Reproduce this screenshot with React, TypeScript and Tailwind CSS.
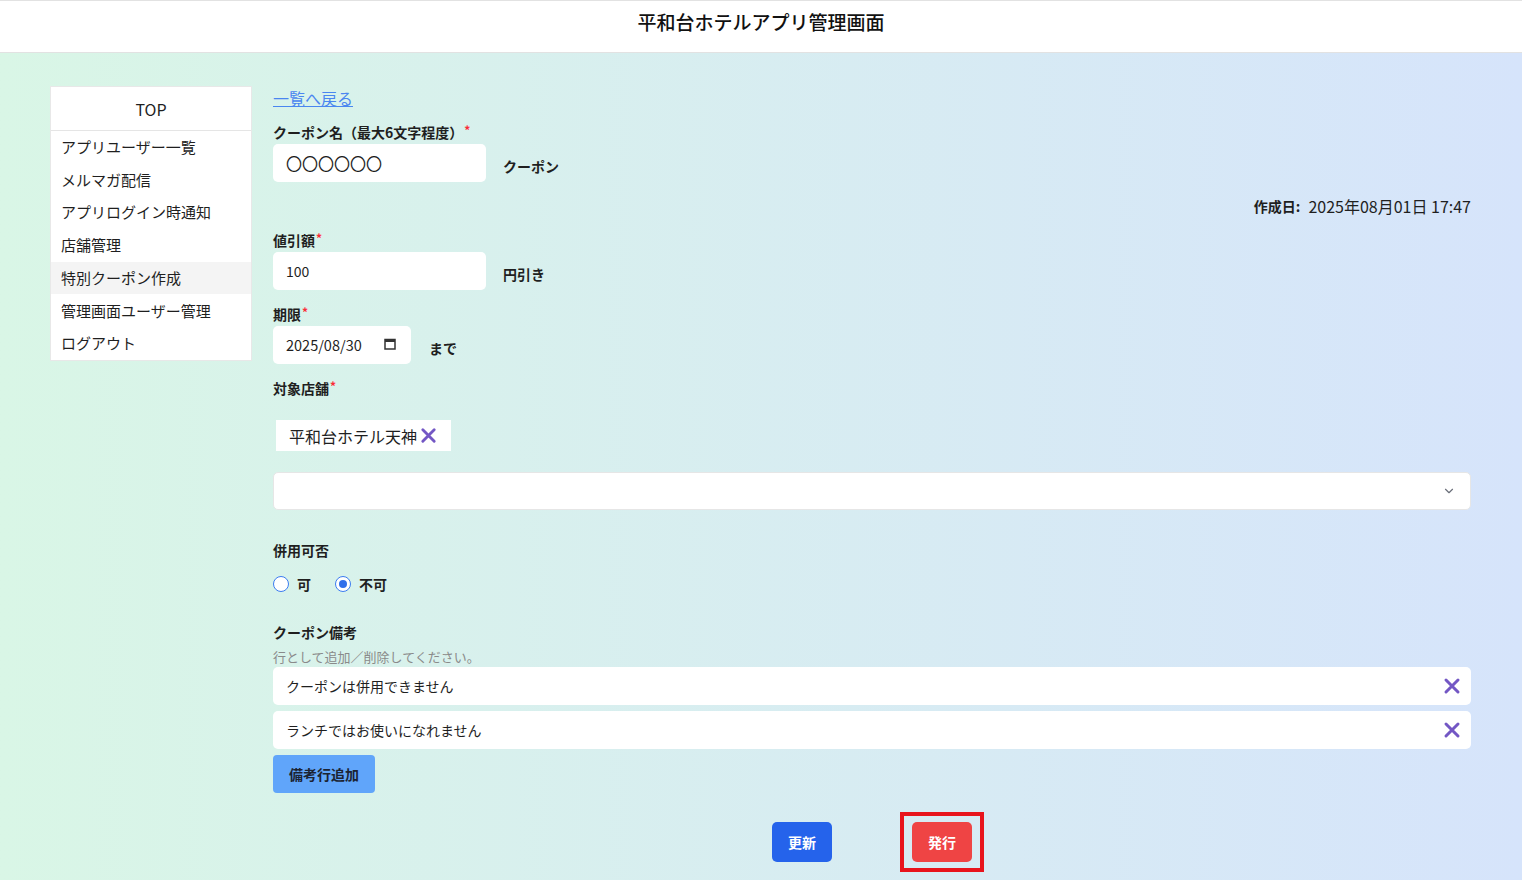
import { ChevronDown } from "lucide-react";

const menu = [
  "アプリユーザー一覧",
  "メルマガ配信",
  "アプリログイン時通知",
  "店舗管理",
  "特別クーポン作成",
  "管理画面ユーザー管理",
  "ログアウト",
];

const notes = ["クーポンは併用できません", "ランチではお使いになれません"];

function Cross({ className }: { className?: string }) {
  return (
    <svg viewBox="0 0 20 20" className={className} aria-hidden="true">
      <path d="M4 4 L16 16 M16 4 L4 16" stroke="#7357c4" strokeWidth="3" strokeLinecap="round" />
    </svg>
  );
}

function Req() {
  return <span className="relative -top-[3px] ml-[1px] text-[12px] leading-none text-red-500">*</span>;
}

function Label({ children }: { children: React.ReactNode }) {
  return <div className="h-[20px] text-[14px] font-semibold leading-[20px] text-[#1f1f1f]">{children}</div>;
}

function Radio({ checked, label }: { checked?: boolean; label: string }) {
  return (
    <label className="flex items-center gap-[8px]">
      <span className="grid h-[16px] w-[16px] place-items-center rounded-full border border-[#3b7cf0] bg-white">
        {checked && <span className="h-[8px] w-[8px] rounded-full bg-[#2f6fea]" />}
      </span>
      <span className="text-[14px] font-semibold">{label}</span>
    </label>
  );
}

export default function App() {
  return (
    <div className="min-h-screen font-['Noto_Sans_CJK_JP','Noto_Sans',sans-serif] text-[#1f1f1f]">
      <header className="flex h-[53px] items-center justify-center border-t border-b border-[#e2e2e2] bg-white">
        <h1 className="-mt-[8px] text-[19px] font-medium text-[#111]">平和台ホテルアプリ管理画面</h1>
      </header>

      <div className="flex items-start gap-[21px] bg-linear-to-r from-[#d9f6e6] to-[#d6e4fb] pt-[33px] pr-[51px] pb-[40px] pl-[50px]">
        <aside className="w-[202px] shrink-0 border border-[#e8e8e8] bg-white">
          <div className="flex h-[44px] items-center justify-center border-b border-[#e5e5e5] text-[16px]">TOP</div>
          <ul>
            {menu.map((m) => (
              <li
                key={m}
                className={`flex h-[32.7px] items-center px-[10px] text-[15px] ${m === "特別クーポン作成" ? "bg-[#f4f4f4]" : ""}`}
              >
                {m}
              </li>
            ))}
          </ul>
        </aside>

        <main className="min-w-0 flex-1">
          <a href="#" className="block h-[24px] text-[16px] leading-[24px] text-[#4a86f0] underline">
            一覧へ戻る
          </a>

          <div className="mt-[12px]">
            <Label>
              クーポン名（最大6文字程度）
              <Req />
            </Label>
          </div>
          <div className="mt-[2px] flex items-end gap-[17px]">
            <div className="flex h-[38px] w-[213px] items-center rounded-[5px] bg-white px-[13px] text-[16px]">〇〇〇〇〇〇</div>
            <span className="pb-[6px] text-[14px] font-semibold leading-[20px]">クーポン</span>
          </div>

          <div className="mt-[13px] flex h-[22px] items-center justify-end gap-[8px]">
            <span className="text-[14px] font-semibold">作成日:</span>
            <span className="text-[16px]">2025年08月01日 17:47</span>
          </div>

          <div className="mt-[13px]">
            <Label>
              値引額<Req />
            </Label>
          </div>
          <div className="mt-[2px] flex items-end gap-[17px]">
            <div className="flex h-[38px] w-[213px] items-center rounded-[5px] bg-white px-[13px] text-[14px]">100</div>
            <span className="pb-[6px] text-[14px] font-semibold leading-[20px]">円引き</span>
          </div>

          <div className="mt-[14px]">
            <Label>
              期限<Req />
            </Label>
          </div>
          <div className="mt-[2px] flex items-end gap-[18px]">
            <div className="flex h-[38px] w-[138px] items-center justify-between rounded-[5px] bg-white pr-[15px] pl-[13px] text-[14.5px]">
              <span>2025/08/30</span>
              <svg viewBox="0 0 12 12" className="mt-[-2px] h-[12px] w-[12px]" aria-hidden="true">
                <path d="M1 1.5 H11 V11 H1 Z" fill="none" stroke="#333" strokeWidth="1.5" />
                <rect x="1" y="1.5" width="10" height="2.5" fill="#333" />
              </svg>
            </div>
            <span className="pb-[6px] text-[14px] font-semibold leading-[20px]">まで</span>
          </div>

          <div className="mt-[14px]">
            <Label>
              対象店舗<Req />
            </Label>
          </div>
          <div className="mt-[22px] ml-[3px] inline-flex h-[31px] items-center gap-[2px] bg-white pr-[13px] pl-[13px] text-[16px]">
            平和台ホテル天神
            <Cross className="h-[19px] w-[19px]" />
          </div>
          <div className="mt-[21px] flex h-[38px] items-center justify-end rounded-[5px] border border-[#e6e6e6] bg-white pr-[14px]">
            <ChevronDown className="h-[14px] w-[14px] text-[#6b6f7a]" strokeWidth={2} />
          </div>

          <div className="mt-[30px]">
            <Label>併用可否</Label>
          </div>
          <div className="mt-[14px] flex h-[20px] items-center gap-[24px]">
            <Radio label="可" />
            <Radio checked label="不可" />
          </div>

          <div className="mt-[28px]">
            <Label>クーポン備考</Label>
          </div>
          <div className="mt-[6px] text-[13px] leading-[18px] text-[#8a8a8a]">行として追加／削除してください。</div>
          <div className="mt-[1px] flex flex-col gap-[6px]">
            {notes.map((n) => (
              <div key={n} className="flex h-[38px] items-center justify-between rounded-[5px] bg-white pr-[9px] pl-[13px] text-[14px]">
                <span>{n}</span>
                <Cross className="h-[20px] w-[20px]" />
              </div>
            ))}
          </div>
          <button className="mt-[6px] h-[38px] w-[102px] rounded-[4px] bg-[#60a5fa] text-[14px] font-semibold text-[#1b2333]">
            備考行追加
          </button>

          <div className="mt-[29px] flex justify-center gap-[80px]">
            <button className="h-[40px] w-[60px] rounded-[5px] bg-[#2563eb] text-[14px] font-bold text-white">更新</button>
            <div className="relative">
              <button className="h-[40px] w-[60px] rounded-[5px] bg-[#ef4444] text-[14px] font-bold text-white">発行</button>
              <span className="pointer-events-none absolute -inset-x-[12px] -inset-y-[10px] border-[4px] border-[#e8141c]" />
            </div>
          </div>
        </main>
      </div>
    </div>
  );
}
